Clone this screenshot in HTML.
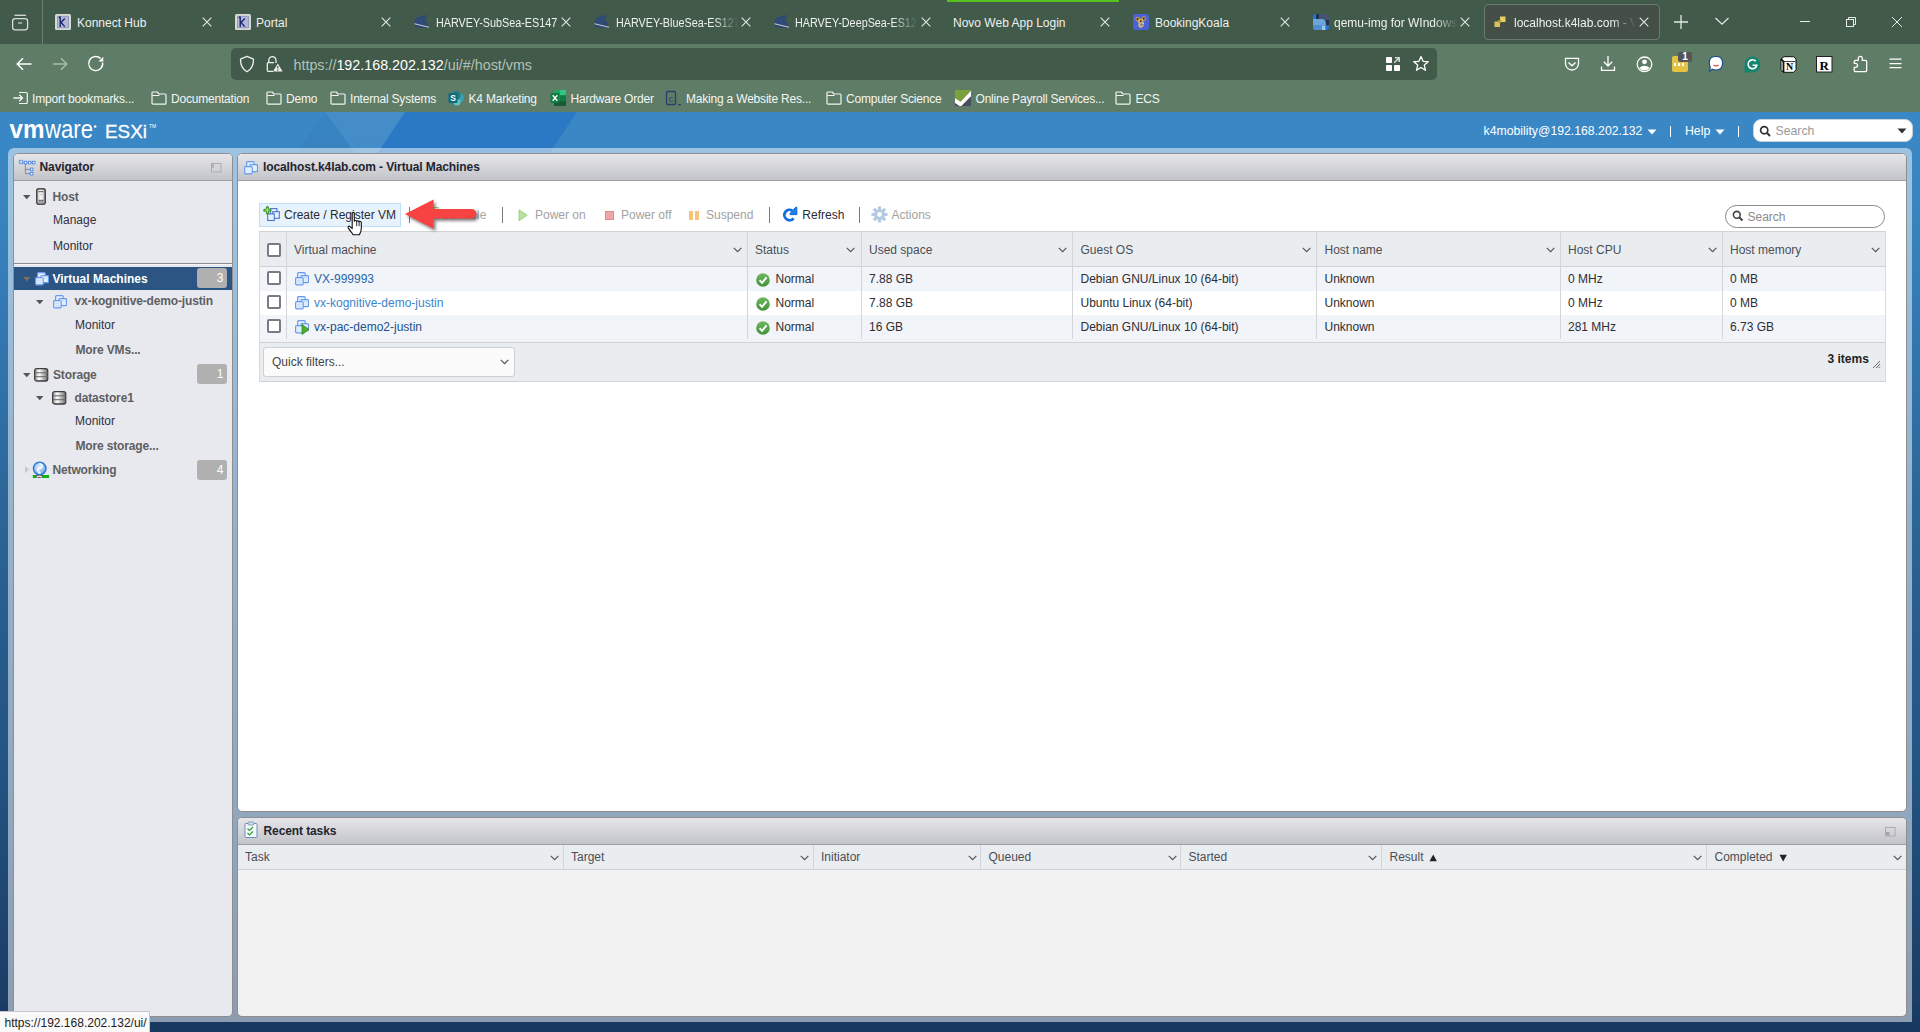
<!DOCTYPE html>
<html><head><meta charset="utf-8">
<style>
*{margin:0;padding:0;box-sizing:border-box}
html,body{width:1920px;height:1032px;overflow:hidden;font-family:"Liberation Sans",sans-serif;background:#1a3a62}
.a{position:absolute;white-space:nowrap}
#tabs{position:absolute;left:0;top:0;width:1920px;height:44px;background:#425a4a}
#tb{position:absolute;left:0;top:44px;width:1920px;height:40px;background:#5e7c66}
#bm{position:absolute;left:0;top:84px;width:1920px;height:28px;background:#5e7c66}
.tt{color:#eef1ee;font-size:12px;top:16px;line-height:14px}
.fade{-webkit-mask-image:linear-gradient(90deg,#000 80%,transparent 100%)}
.tx{top:14px;width:12px;height:12px}
.bt{color:#f4f6f4;font-size:12px;top:92px;line-height:14px;letter-spacing:-0.2px}
#esx{position:absolute;left:0;top:112px;width:1920px;height:920px;background:linear-gradient(#3a87c6 0px,#3a87c6 20px,#3786bf 88px,#3479b4 196px,#2c6698 388px,#295d8f 496px,#235585 638px,#1e4670 796px,#1b3d66 888px,#17375e 920px)}
#frame{position:absolute;left:8px;top:148px;width:1904px;height:874px;border-radius:6px 6px 0 0;background:rgba(255,255,255,0.5)}
.panel{position:absolute;background:#fff;border-radius:5px;overflow:hidden}
.ph{position:absolute;left:0;top:0;right:0;height:27px;background:linear-gradient(#e6e6ea,#c3c4c9);border-bottom:1px solid #9e9ea3}
.ph b{position:absolute;top:7px;font-size:12px;color:#2b2b33}
.nv{position:absolute;font-size:12px;line-height:14px;color:#30303c}
.g{font-weight:bold;color:#5e5e62;letter-spacing:-0.15px}
.hd{position:absolute;font-size:12px;line-height:14px;color:#4a4d55}
.tb12{font-size:12px;line-height:14px}
.cell{position:absolute;font-size:12px;line-height:14px;color:#2e2e33}
</style></head><body>
<div id="tabs">
<svg class="a" style="left:0;top:0" width="44" height="44"><g fill="none" stroke="#d9ddd9" stroke-width="1.3"><rect x="12.6" y="18.6" width="15" height="11.2" rx="2.5"/><path d="M14.5 15.3h11.4"/><path d="M18 23h4.2" stroke-width="1.1"/></g></svg>
<div class="a" style="left:42px;top:0;width:1px;height:44px;background:#6a7f6f"></div>
<!-- tab 1 -->
<svg class="a" style="left:55px;top:14px" width="16" height="16"><rect width="16" height="16" rx="1.5" fill="#d6d9d6"/><rect x="2.5" y="2.3" width="11" height="11.5" fill="#b4b8d2" stroke="#8a90bc" stroke-width="0.8"/><path d="M5.2 2.5V13M4 4.2L5.2 2.5M5.2 9.3L9.8 4.5M5.8 8.2L9.8 12.6" stroke="#1c2870" stroke-width="1.4" fill="none"/></svg>
<span class="a tt" style="left:77px">Konnect Hub</span>
<!-- tab 2 -->
<svg class="a" style="left:235px;top:14px" width="16" height="16"><rect width="16" height="16" rx="1.5" fill="#d6d9d6"/><rect x="2.5" y="2.3" width="11" height="11.5" fill="#b4b8d2" stroke="#8a90bc" stroke-width="0.8"/><path d="M5.2 2.5V13M4 4.2L5.2 2.5M5.2 9.3L9.8 4.5M5.8 8.2L9.8 12.6" stroke="#1c2870" stroke-width="1.4" fill="none"/></svg>
<span class="a tt" style="left:256px">Portal</span>
<!-- harvey tabs -->
<svg class="a" style="left:414px;top:14px" width="17" height="17"><path d="M0.5 5.5C3 3.5 7 1.2 12.5 1.2L14 1.8C12 2.5 11.2 4 11.6 6 12 7.8 14.3 8.8 14.3 10.5V13.5C10 14.5 4 14 0.5 12.5Z" fill="#2f4a74"/><path d="M0.5 9.8L15 13.3" stroke="#c4c9c4" stroke-width="1.1"/></svg>
<span class="a tt" style="left:436px;transform:scaleX(0.9);transform-origin:0 0">HARVEY-SubSea-ES147</span>
<svg class="a" style="left:594px;top:14px" width="17" height="17"><path d="M0.5 5.5C3 3.5 7 1.2 12.5 1.2L14 1.8C12 2.5 11.2 4 11.6 6 12 7.8 14.3 8.8 14.3 10.5V13.5C10 14.5 4 14 0.5 12.5Z" fill="#2f4a74"/><path d="M0.5 9.8L15 13.3" stroke="#c4c9c4" stroke-width="1.1"/></svg>
<span class="a tt fade" style="left:616px;width:136px;overflow:hidden;transform:scaleX(0.9);transform-origin:0 0">HARVEY-BlueSea-ES127</span>
<svg class="a" style="left:774px;top:14px" width="17" height="17"><path d="M0.5 5.5C3 3.5 7 1.2 12.5 1.2L14 1.8C12 2.5 11.2 4 11.6 6 12 7.8 14.3 8.8 14.3 10.5V13.5C10 14.5 4 14 0.5 12.5Z" fill="#2f4a74"/><path d="M0.5 9.8L15 13.3" stroke="#c4c9c4" stroke-width="1.1"/></svg>
<span class="a tt fade" style="left:795px;width:136px;overflow:hidden;transform:scaleX(0.9);transform-origin:0 0">HARVEY-DeepSea-ES127</span>
<div class="a" style="left:947px;top:0;width:172px;height:2px;background:#55c21f"></div>
<span class="a tt" style="left:953px">Novo Web App Login</span>
<svg class="a" style="left:1133px;top:14px" width="16" height="16"><rect width="16" height="16" rx="2.5" fill="#4b62d6"/><circle cx="4.5" cy="5" r="2.2" fill="#b99a55"/><circle cx="10.8" cy="4.5" r="2.2" fill="#b99a55"/><circle cx="4.5" cy="5" r="1" fill="#2a2010"/><circle cx="10.8" cy="4.5" r="1" fill="#2a2010"/><ellipse cx="7.6" cy="7.2" rx="2.8" ry="2.6" fill="#c9ab66"/><circle cx="7.8" cy="7.2" r="0.9" fill="#3a2a10"/><path d="M7.5 9.5C6 10.5 5.8 12 7 12.5 8.5 13 10 12 9.8 10.5" stroke="#d4b874" stroke-width="2" fill="none"/><path d="M9.5 8.2L10.5 10" stroke="#eee" stroke-width="1.1"/></svg>
<span class="a tt" style="left:1155px">BookingKoala</span>
<svg class="a" style="left:1313px;top:14px" width="16" height="16"><defs><clipPath id="qc"><rect width="16" height="16" rx="3"/></clipPath></defs><g clip-path="url(#qc)"><rect width="16" height="16" fill="#45556f"/><rect x="0" y="0" width="3" height="5" fill="#1a78e0"/><rect x="3" y="0" width="3" height="5" fill="#223350"/><rect x="12.5" y="6" width="3.5" height="5" fill="#233450"/><path d="M0 5H8.5Q12.8 5 12.8 9.5V16H0Z" fill="#6aa6dc"/><rect x="0" y="11" width="9" height="5" fill="#4f8fd0"/><rect x="9" y="12" width="3.5" height="4" fill="#9cc6ea"/><rect x="12.5" y="12" width="3.5" height="4" fill="#1a78e0"/></g></svg>
<span class="a tt fade" style="left:1334px;width:124px;overflow:hidden">qemu-img for WIndows</span>
<div class="a" style="left:1484px;top:4px;width:176px;height:36px;border-radius:4px;background:#434f47;border:1px solid #6a7c70"></div>
<svg class="a" style="left:1494px;top:16px" width="12" height="12"><rect x="0.5" y="5.5" width="5.5" height="5.5" fill="#d9c25a"/><rect x="6" y="0.5" width="5.5" height="5.5" fill="#e6cf62"/><rect x="4" y="4" width="3" height="3" fill="#b39a3a"/></svg>
<span class="a tt fade" style="left:1514px;width:122px;overflow:hidden">localhost.k4lab.com - Virtual Machines</span>
<svg class="a" style="left:201.75px;top:17px" width="10" height="10"><path d="M0.7 0.7L9.3 9.3M9.3 0.7L0.7 9.3" stroke="#e4e8e4" stroke-width="1.1"/></svg>
<svg class="a" style="left:381.25px;top:17px" width="10" height="10"><path d="M0.7 0.7L9.3 9.3M9.3 0.7L0.7 9.3" stroke="#e4e8e4" stroke-width="1.1"/></svg>
<svg class="a" style="left:561.00px;top:17px" width="10" height="10"><path d="M0.7 0.7L9.3 9.3M9.3 0.7L0.7 9.3" stroke="#e4e8e4" stroke-width="1.1"/></svg>
<svg class="a" style="left:741.00px;top:17px" width="10" height="10"><path d="M0.7 0.7L9.3 9.3M9.3 0.7L0.7 9.3" stroke="#e4e8e4" stroke-width="1.1"/></svg>
<svg class="a" style="left:920.50px;top:17px" width="10" height="10"><path d="M0.7 0.7L9.3 9.3M9.3 0.7L0.7 9.3" stroke="#e4e8e4" stroke-width="1.1"/></svg>
<svg class="a" style="left:1100.00px;top:17px" width="10" height="10"><path d="M0.7 0.7L9.3 9.3M9.3 0.7L0.7 9.3" stroke="#e4e8e4" stroke-width="1.1"/></svg>
<svg class="a" style="left:1280.00px;top:17px" width="10" height="10"><path d="M0.7 0.7L9.3 9.3M9.3 0.7L0.7 9.3" stroke="#e4e8e4" stroke-width="1.1"/></svg>
<svg class="a" style="left:1459.50px;top:17px" width="10" height="10"><path d="M0.7 0.7L9.3 9.3M9.3 0.7L0.7 9.3" stroke="#e4e8e4" stroke-width="1.1"/></svg>
<svg class="a" style="left:1639.00px;top:17px" width="10" height="10"><path d="M0.7 0.7L9.3 9.3M9.3 0.7L0.7 9.3" stroke="#e4e8e4" stroke-width="1.1"/></svg>
<svg class="a" style="left:1672px;top:13px" width="18" height="18"><path d="M9 2v14M2 9h14" stroke="#e4e8e4" stroke-width="1.3"/></svg>
<svg class="a" style="left:1714px;top:16px" width="16" height="10"><path d="M1.5 2L8 8.2 14.5 2" stroke="#e4e8e4" stroke-width="1.3" fill="none"/></svg>
<div class="a" style="left:1800px;top:21px;width:10px;height:1px;background:#e8ece8"></div>
<svg class="a" style="left:1845px;top:16px" width="13" height="13"><g fill="none" stroke="#e8ece8" stroke-width="1"><rect x="1.5" y="3.5" width="7" height="7"/><path d="M3.5 3.5V1.5H10.5V8.5H9"/></g></svg>
<svg class="a" style="left:1891px;top:16px" width="12" height="12"><path d="M1 1L11 11M11 1L1 11" stroke="#e8ece8" stroke-width="1"/></svg>
</div>
<div id="tb">
<svg class="a" style="left:14px;top:12px" width="20" height="16"><path d="M3.2 8H17.5M9 2.3L3.2 8 9 13.7" stroke="#fff" stroke-width="1.5" fill="none"/></svg>
<svg class="a" style="left:50px;top:12px" width="20" height="16"><path d="M3 8H16.8M11 2.3L16.8 8 11 13.7" stroke="#a9bdab" stroke-width="1.5" fill="none"/></svg>
<svg class="a" style="left:86px;top:10px" width="20" height="20"><path d="M16.6 8.5A7 7 0 1 1 14.6 4.6" stroke="#fff" stroke-width="1.4" fill="none"/><path d="M12.5 7.6H17.3V2.7Z" fill="#fff"/></svg>
<div class="a" style="left:231px;top:4px;width:1206px;height:32px;border-radius:5px;background:#415a4a"></div>
<svg class="a" style="left:238px;top:11px" width="18" height="18"><path d="M9 1.3L15.5 4.2C15.6 10 13 14.5 9 16.7 5 14.5 2.4 10 2.5 4.2Z" stroke="#eef0ee" stroke-width="1.3" fill="none" stroke-linejoin="round"/></svg>
<svg class="a" style="left:265px;top:11px" width="20" height="18"><path d="M3.8 7.3V5.3a3.6 3.6 0 0 1 7.2 0V8" stroke="#eef0ee" stroke-width="1.3" fill="none"/><path d="M8 16.3H3.3a1 1 0 0 1-1-1V8.7a1 1 0 0 1 1-1H9" stroke="#eef0ee" stroke-width="1.3" fill="none"/><path d="M12.8 8.6L17.6 16.6H8Z" fill="#eef0ee"/><path d="M12.8 11v2.6" stroke="#415a4a" stroke-width="1.2"/><circle cx="12.8" cy="15" r="0.7" fill="#415a4a"/></svg>
<span class="a" style="left:293.5px;top:13px;font-size:14.3px;line-height:16px;color:#b3c2b6">https://<span style="color:#fff">192.168.202.132</span>/ui/#/host/vms</span>
<svg class="a" style="left:1386px;top:13px" width="15" height="15"><rect x="0" y="0" width="6" height="6" rx="0.8" fill="#fff"/><rect x="0" y="8" width="6" height="6" rx="0.8" fill="#fff"/><rect x="8" y="8" width="6" height="6" rx="0.8" fill="#fff"/><path d="M8.2 5.8L13 1M9 0.8H13.2V5" stroke="#d0d4d0" stroke-width="1.6" fill="none"/></svg>
<svg class="a" style="left:1412px;top:11px" width="18" height="18"><path d="M9 1.5L11.1 6.3 16.2 6.7 12.3 10.1 13.5 15.3 9 12.5 4.5 15.3 5.7 10.1 1.8 6.7 6.9 6.3Z" stroke="#fff" stroke-width="1.3" fill="none" stroke-linejoin="round"/></svg>
<svg class="a" style="left:1563px;top:12px" width="18" height="16"><path d="M2.5 2.3H15.5V7.5A6.5 6.5 0 0 1 2.5 7.5Z" stroke="#fff" stroke-width="1.3" fill="none" stroke-linejoin="round"/><path d="M5.5 6.5L9 9.8 12.5 6.5" stroke="#fff" stroke-width="1.4" fill="none"/></svg>
<svg class="a" style="left:1600px;top:11px" width="16" height="17"><path d="M8 1V11M3.8 6.8L8 11 12.2 6.8M1.5 11.5V15.3H14.5V11.5" stroke="#fff" stroke-width="1.3" fill="none"/></svg>
<svg class="a" style="left:1636px;top:12px" width="17" height="17"><circle cx="8.5" cy="8.3" r="7.3" stroke="#fff" stroke-width="1.3" fill="none"/><circle cx="8.5" cy="5.8" r="2.4" fill="#fff"/><path d="M3.3 11.7Q8.5 7.6 13.7 11.7 11.5 14.6 8.5 14.6 5.5 14.6 3.3 11.7Z" fill="#fff"/></svg>
<div class="a" style="left:1672px;top:12px;width:16px;height:16px;border-radius:2px;background:#e3c244"></div>
<div class="a" style="left:1674px;top:19px;width:12px;height:3px;background:repeating-linear-gradient(90deg,#fff 0 2.5px,transparent 2.5px 4px)"></div>
<div class="a" style="left:1678px;top:8px;width:14px;height:10px;border-radius:2px;background:#555;color:#fff;font-size:10px;font-weight:bold;line-height:10px;text-align:center">1</div>
<svg class="a" style="left:1708px;top:11px" width="16" height="18"><path d="M8 1.3C12.3 1.3 14.6 3.5 14.6 7.8 14.6 12.3 12.3 15 8 15 6.6 15 5.3 14.7 4.3 14.2L1.3 16.3 2.3 12.6C1.6 11.3 1.3 9.7 1.3 7.8 1.3 3.5 3.7 1.3 8 1.3Z" fill="#fff" stroke="#1f4f8a" stroke-width="1.2"/><path d="M5.6 10Q8 12 10.5 10" stroke="#e0262b" stroke-width="1.2" fill="none"/></svg>
<svg class="a" style="left:1744px;top:12px" width="17" height="17"><path d="M8.5 0.5A8 8 0 1 1 8.5 16.5H0.5V8.5A8 8 0 0 1 8.5 0.5Z" fill="#15846e"/><path d="M11.8 5.3A4.4 4.4 0 1 0 12.8 9.2H8.6" stroke="#fff" stroke-width="1.6" fill="none"/></svg>
<svg class="a" style="left:1780px;top:12px" width="17" height="17"><path d="M1 3L4 0.7H13.5L16 3V13.8L13.5 16.3H3L1 13.5Z" fill="#fff" stroke="#111" stroke-width="1"/><path d="M1 3L3.5 5.5V16" stroke="#111" stroke-width="1.8" fill="none"/><path d="M3.5 5.5H15.5" stroke="#111" stroke-width="0.8"/><text x="9.5" y="14.2" text-anchor="middle" font-family="Liberation Serif" font-weight="bold" font-size="10" fill="#000">N</text></svg>
<svg class="a" style="left:1816px;top:12px" width="17" height="17"><rect x="0.5" y="0.5" width="15.5" height="15.5" fill="#fff" stroke="#222" stroke-width="1"/><text x="8.3" y="13.5" text-anchor="middle" font-family="Liberation Serif" font-weight="bold" font-size="13" fill="#000">R</text></svg>
<svg class="a" style="left:1852px;top:11px" width="17" height="18"><path d="M3.7 5.3H6.3V3.3A2 2 0 0 1 10.3 3.3V5.3H13.2A1.5 1.5 0 0 1 14.7 6.8V15.2A1.5 1.5 0 0 1 13.2 16.7H3.7A1.5 1.5 0 0 1 2.2 15.2V12.4H3.5A2.05 2.05 0 0 0 3.5 8.3H2.2V6.8A1.5 1.5 0 0 1 3.7 5.3Z" stroke="#fff" stroke-width="1.3" fill="none" stroke-linejoin="round"/></svg>
<svg class="a" style="left:1888px;top:13px" width="15" height="13"><path d="M1.5 2.2H13.5M1.5 6.7H13.5M1.5 10.6H13.5" stroke="#fff" stroke-width="1.3"/></svg>
</div>
<div id="bm"></div>
<div id="bmi">
<svg class="a" style="left:12px;top:91px" width="17" height="14"><path d="M7 1.5H14.3a1 1 0 0 1 1 1V11.5a1 1 0 0 1-1 1H7" stroke="#f2f4f2" stroke-width="1.2" fill="none"/><path d="M1.3 7H10.5M7.3 3.8L10.5 7 7.3 10.2" stroke="#f2f4f2" stroke-width="1.3" fill="none"/></svg>
<span class="a bt" style="left:32px">Import bookmarks...</span>
<svg class="a" style="left:151px;top:91px" width="16" height="14"><path d="M1 2a1 1 0 0 1 1-1h4.2l1.8 2h6a1 1 0 0 1 1 1v8.2a1 1 0 0 1-1 1H2a1 1 0 0 1-1-1Z" stroke="#f2f4f2" stroke-width="1.2" fill="none" stroke-linejoin="round"/><path d="M1.2 4.5H8.5" stroke="#f2f4f2" stroke-width="1"/></svg><span class="a bt" style="left:171px">Documentation</span>
<svg class="a" style="left:266px;top:91px" width="16" height="14"><path d="M1 2a1 1 0 0 1 1-1h4.2l1.8 2h6a1 1 0 0 1 1 1v8.2a1 1 0 0 1-1 1H2a1 1 0 0 1-1-1Z" stroke="#f2f4f2" stroke-width="1.2" fill="none" stroke-linejoin="round"/><path d="M1.2 4.5H8.5" stroke="#f2f4f2" stroke-width="1"/></svg><span class="a bt" style="left:286px">Demo</span>
<svg class="a" style="left:330px;top:91px" width="16" height="14"><path d="M1 2a1 1 0 0 1 1-1h4.2l1.8 2h6a1 1 0 0 1 1 1v8.2a1 1 0 0 1-1 1H2a1 1 0 0 1-1-1Z" stroke="#f2f4f2" stroke-width="1.2" fill="none" stroke-linejoin="round"/><path d="M1.2 4.5H8.5" stroke="#f2f4f2" stroke-width="1"/></svg><span class="a bt" style="left:350px">Internal Systems</span>
<svg class="a" style="left:448px;top:90px" width="17" height="16"><circle cx="11.5" cy="8" r="4.5" fill="#37a3b0"/><circle cx="9" cy="12" r="3.5" fill="#5fc2cc"/><circle cx="8" cy="5.5" r="4.5" fill="#1d7a86"/><rect x="0.5" y="3" width="9" height="10" rx="1" fill="#0f6b78"/><text x="5" y="11.3" text-anchor="middle" font-family="Liberation Sans" font-weight="bold" font-size="8.5" fill="#fff">S</text></svg>
<span class="a bt" style="left:468.5px">K4 Marketing</span>
<svg class="a" style="left:550px;top:90px" width="17" height="16"><rect x="4" y="0" width="12" height="16" rx="1" fill="#21a366"/><rect x="10" y="0" width="6" height="5.3" fill="#33c481"/><rect x="4" y="10.6" width="12" height="5.4" fill="#185c37"/><rect x="10" y="5.3" width="6" height="5.3" fill="#107c41"/><rect x="0.5" y="3" width="9" height="10" rx="1" fill="#107c41"/><path d="M2.7 5.3L7.3 10.8M7.3 5.3L2.7 10.8" stroke="#fff" stroke-width="1.4"/></svg>
<span class="a bt" style="left:570.5px">Hardware Order</span>
<svg class="a" style="left:665px;top:90px" width="18" height="16"><rect x="1.5" y="1.5" width="9" height="13" rx="1" stroke="#2b3c6e" stroke-width="1.3" fill="none"/><text x="6" y="12" text-anchor="middle" font-family="Liberation Sans" font-size="9" fill="#2b3c6e">c</text><path d="M13 14.6H16" stroke="#2b3c6e" stroke-width="1.2"/></svg>
<span class="a bt" style="left:686px">Making a Website Res...</span>
<svg class="a" style="left:826px;top:91px" width="16" height="14"><path d="M1 2a1 1 0 0 1 1-1h4.2l1.8 2h6a1 1 0 0 1 1 1v8.2a1 1 0 0 1-1 1H2a1 1 0 0 1-1-1Z" stroke="#f2f4f2" stroke-width="1.2" fill="none" stroke-linejoin="round"/><path d="M1.2 4.5H8.5" stroke="#f2f4f2" stroke-width="1"/></svg><span class="a bt" style="left:846px">Computer Science</span>
<svg class="a" style="left:955px;top:90px" width="16" height="16"><rect x="0" y="0" width="16" height="16" fill="#484e60"/><path d="M0 0H16V0.8L5.5 11.8 0 8Z" fill="#7ca03c"/><path d="M0 8L5.5 11.8 16 0.8V6.3L6.3 16H4.6L0 13Z" fill="#fff"/></svg>
<span class="a bt" style="left:975.5px">Online Payroll Services...</span>
<svg class="a" style="left:1115px;top:91px" width="16" height="14"><path d="M1 2a1 1 0 0 1 1-1h4.2l1.8 2h6a1 1 0 0 1 1 1v8.2a1 1 0 0 1-1 1H2a1 1 0 0 1-1-1Z" stroke="#f2f4f2" stroke-width="1.2" fill="none" stroke-linejoin="round"/><path d="M1.2 4.5H8.5" stroke="#f2f4f2" stroke-width="1"/></svg><span class="a bt" style="left:1135.5px">ECS</span>
</div>
<div id="esx"></div>
<svg class="a" style="left:0;top:112px" width="1920" height="42"><polygon points="325,0 405,0 377.3,41.5 355.6,41.5" fill="#ffffff" opacity="0.055"/><polygon points="325,0 295.6,41.5 355.6,41.5" fill="#000" opacity="0.025"/><polygon points="405,0 577,0 549.3,41.5 377.3,41.5" fill="#1f6ec4" opacity="0.55"/><polygon points="577,0 1920,0 1920,41.5 549.3,41.5" fill="#3d86c2" opacity="0.25"/></svg>
<svg class="a" style="left:8px;top:120px" width="150" height="24"><text x="1.6" y="17.8" font-family="Liberation Sans" font-weight="bold" font-size="25" textLength="35" lengthAdjust="spacingAndGlyphs" fill="#fff">vm</text><text x="37" y="17.8" font-family="Liberation Sans" font-size="25" textLength="48" lengthAdjust="spacingAndGlyphs" fill="#fff">ware</text><circle cx="87.2" cy="6.5" r="1.3" fill="#fff"/><text x="97" y="17.8" font-family="Liberation Sans" font-size="18.6" textLength="42" lengthAdjust="spacingAndGlyphs" fill="#fff" stroke="#fff" stroke-width="0.3">ESXi</text><text x="141" y="8" font-family="Liberation Sans" font-size="5" fill="#fff">TM</text></svg>
<span class="a" style="left:1483.5px;top:124px;font-size:12.25px;line-height:14px;color:#fff">k4mobility@192.168.202.132</span>
<svg class="a" style="left:1647px;top:129px" width="10" height="6"><path d="M0.5 0.5H9.5L5 5.5Z" fill="#fff"/></svg>
<div class="a" style="left:1670px;top:126px;width:1px;height:11px;background:#fff"></div>
<span class="a" style="left:1685px;top:124px;font-size:12.25px;line-height:14px;color:#fff">Help</span>
<svg class="a" style="left:1715px;top:129px" width="10" height="6"><path d="M0.5 0.5H9.5L5 5.5Z" fill="#fff"/></svg>
<div class="a" style="left:1738px;top:126px;width:1px;height:11px;background:#fff"></div>
<div class="a" style="left:1753px;top:119px;width:160px;height:23px;border-radius:8px;background:#fff;border:1px solid #c9d3dc"></div>
<svg class="a" style="left:1759px;top:125px" width="13" height="13"><circle cx="5.2" cy="5.2" r="3.6" stroke="#333" stroke-width="1.7" fill="none"/><path d="M7.8 7.8L11 11" stroke="#333" stroke-width="2"/></svg>
<span class="a" style="left:1775.5px;top:124px;font-size:12.25px;line-height:14px;color:#999">Search</span>
<svg class="a" style="left:1897px;top:128px" width="10" height="6"><path d="M0.5 0.5H9.5L5 5.5Z" fill="#333"/></svg>
<div id="frame"></div>
<!-- navigator panel -->
<div class="panel" style="left:13px;top:153px;width:220px;height:864px;background:#e8e9ee;border:1px solid #8e8e90">
 <div class="ph"></div>
</div>
<svg class="a" style="left:18px;top:159px" width="18" height="18"><path d="M4.7 3.6H6.2M8.8 3.6H10.3M12.9 3.6H14.4" stroke="#4f80dc" stroke-width="0.8"/><path d="M7.4 4.9V14.7H12.3M7.4 10.4H12.3" stroke="#7383a3" stroke-width="0.9" fill="none"/><rect x="1.3" y="1.3" width="3.4" height="3.4" fill="#b5d8fb" stroke="#6a9ae6" stroke-width="0.9"/><g fill="#fff" stroke="#4f80dc" stroke-width="0.9"><rect x="6.2" y="2.3" width="2.6" height="2.6"/><rect x="10.3" y="2.3" width="2.6" height="2.6"/><rect x="14.4" y="2.3" width="2.6" height="2.6"/><rect x="12.3" y="9.1" width="2.6" height="2.6"/><rect x="12.3" y="13.4" width="2.6" height="2.6"/></g></svg>
<span class="a" style="left:39.5px;top:160px;font-size:12px;line-height:14px;font-weight:bold;color:#222530;letter-spacing:-0.1px">Navigator</span>
<svg class="a" style="left:211px;top:163px" width="11" height="10"><rect x="0.5" y="0.5" width="9.5" height="8.5" fill="none" stroke="#acacb0"/><rect x="1" y="1" width="2" height="4" fill="#b4b4b8"/></svg>
<svg class="a" style="left:23px;top:195px" width="8" height="5"><path d="M0 0H7.5L3.75 4.2Z" fill="#555"/></svg><svg class="a" style="left:36px;top:188px" width="10" height="17"><defs><linearGradient id="hg" x1="0" x2="1"><stop offset="0" stop-color="#bbb"/><stop offset="0.5" stop-color="#fff"/><stop offset="1" stop-color="#aaa"/></linearGradient></defs><rect x="0.8" y="0.8" width="8.4" height="15.4" rx="1.5" fill="url(#hg)" stroke="#222" stroke-width="1.2"/><path d="M2.5 3.7H7.5M2.5 12.3H7.5M2.5 14H7.5" stroke="#444" stroke-width="0.9"/><circle cx="5" cy="6.8" r="0.5" fill="#444"/></svg>
<span class="a nv g" style="left:52.5px;top:190px">Host</span>
<span class="a nv" style="left:53px;top:213px">Manage</span>
<span class="a nv" style="left:53px;top:239px">Monitor</span>
<div class="a" style="left:14px;top:263px;width:218px;height:1px;background:#8f8f8f"></div>
<div class="a" style="left:14px;top:264px;width:218px;height:1px;background:#f5f5f8"></div>
<div class="a" style="left:14px;top:267px;width:218px;height:23px;background:#2c5584"></div>
<svg class="a" style="left:23px;top:277px" width="8" height="5"><path d="M0 0H7.5L3.75 4.2Z" fill="#7b6f60"/></svg><svg class="a" style="left:34px;top:272px" width="15" height="14"><g stroke="#6b98ec" stroke-width="1.15" fill="#dfeffd"><rect x="3.6" y="0.6" width="7.6" height="6.5" rx="1"/><rect x="6.9" y="3.6" width="7.6" height="7" rx="1"/><rect x="1.6" y="5.6" width="7.6" height="7.2" rx="1"/></g><path d="M3 8.3h5M3 10.5h5M8 5.8h5" stroke="#b4d2f6" stroke-width="0.7"/></svg>
<span class="a nv" style="left:52.5px;top:272px;font-weight:bold;color:#fff">Virtual Machines</span>
<div class="a" style="left:197px;top:268px;width:30px;height:19.5px;border-radius:3px;background:#b0b0b0;color:#fff;font-size:12px;line-height:21px;text-align:right;padding-right:3.5px">3</div><svg class="a" style="left:36px;top:300px" width="8" height="5"><path d="M0 0H7.5L3.75 4.2Z" fill="#555"/></svg><svg class="a" style="left:52px;top:295px" width="15" height="14"><g stroke="#6b98ec" stroke-width="1.15" fill="#dfeffd"><rect x="3.6" y="0.6" width="7.6" height="6.5" rx="1"/><rect x="6.9" y="3.6" width="7.6" height="7" rx="1"/><rect x="1.6" y="5.6" width="7.6" height="7.2" rx="1"/></g><path d="M3 8.3h5M3 10.5h5M8 5.8h5" stroke="#b4d2f6" stroke-width="0.7"/></svg>
<span class="a nv g" style="left:74.5px;top:294px">vx-kognitive-demo-justin</span>
<span class="a nv" style="left:75px;top:318px">Monitor</span>
<span class="a nv g" style="left:75.5px;top:343px;font-weight:bold">More VMs...</span>
<svg class="a" style="left:23px;top:373px" width="8" height="5"><path d="M0 0H7.5L3.75 4.2Z" fill="#555"/></svg><svg class="a" style="left:34px;top:368px" width="15" height="14"><defs><linearGradient id="dg" x1="0" x2="1"><stop offset="0" stop-color="#9a9a9a"/><stop offset="0.35" stop-color="#fff"/><stop offset="1" stop-color="#6f6f6f"/></linearGradient></defs><rect x="0.7" y="0.7" width="13" height="12.3" rx="2" fill="url(#dg)" stroke="#3d3d3d" stroke-width="1.3"/><path d="M1 4.8H14M1 8.7H14" stroke="#666" stroke-width="1"/></svg>
<span class="a nv g" style="left:53px;top:367.5px">Storage</span>
<div class="a" style="left:197px;top:364px;width:30px;height:19.5px;border-radius:3px;background:#b0b0b0;color:#fff;font-size:12px;line-height:21px;text-align:right;padding-right:3.5px">1</div><svg class="a" style="left:36px;top:396px" width="8" height="5"><path d="M0 0H7.5L3.75 4.2Z" fill="#555"/></svg><svg class="a" style="left:52px;top:391px" width="15" height="14"><defs><linearGradient id="dg" x1="0" x2="1"><stop offset="0" stop-color="#9a9a9a"/><stop offset="0.35" stop-color="#fff"/><stop offset="1" stop-color="#6f6f6f"/></linearGradient></defs><rect x="0.7" y="0.7" width="13" height="12.3" rx="2" fill="url(#dg)" stroke="#3d3d3d" stroke-width="1.3"/><path d="M1 4.8H14M1 8.7H14" stroke="#666" stroke-width="1"/></svg>
<span class="a nv g" style="left:74.5px;top:390.5px">datastore1</span>
<span class="a nv" style="left:75px;top:414px">Monitor</span>
<span class="a nv g" style="left:75.5px;top:439px">More storage...</span>
<svg class="a" style="left:25px;top:466px" width="5" height="8"><path d="M0 0L4 3.6 0 7.2Z" fill="#c8c8cc"/></svg>
<svg class="a" style="left:32px;top:461px" width="18" height="18"><defs><radialGradient id="gg" cx="0.45" cy="0.4" r="0.6"><stop offset="0" stop-color="#eaf6ff"/><stop offset="0.6" stop-color="#9cc4f4"/><stop offset="1" stop-color="#5b93e8"/></radialGradient></defs><circle cx="7.7" cy="7.5" r="6.3" fill="url(#gg)" stroke="#1f74d6" stroke-width="1.3"/><path d="M7.2 2.6Q11.3 3.6 9.6 6.2 7.2 7.6 5.6 8.8 6.2 11.5 8.6 12.3" stroke="#f4fbff" stroke-width="2" fill="none" opacity="0.9"/><rect x="0.8" y="14" width="16.3" height="3" fill="#0db20d"/><rect x="4" y="14" width="6.5" height="3" fill="#666"/><path d="M4.8 16.3Q7.3 14.2 9.8 16.3" stroke="#fff" stroke-width="1.1" fill="none"/></svg>
<span class="a nv g" style="left:52.5px;top:462.5px">Networking</span>
<div class="a" style="left:197px;top:460px;width:30px;height:19.5px;border-radius:3px;background:#b0b0b0;color:#fff;font-size:12px;line-height:21px;text-align:right;padding-right:3.5px">4</div><!-- main panel -->
<div class="panel" style="left:237px;top:153px;width:1670px;height:659px;border:1px solid #8e8e90">
 <div class="ph"></div>
</div>
<svg class="a" style="left:243px;top:161px" width="15" height="14"><g stroke="#6b98ec" stroke-width="1.15" fill="#dfeffd"><rect x="3.6" y="0.6" width="7.6" height="6.5" rx="1"/><rect x="6.9" y="3.6" width="7.6" height="7" rx="1"/><rect x="1.6" y="5.6" width="7.6" height="7.2" rx="1"/></g></svg>
<span class="a" style="left:263px;top:160px;font-size:12px;line-height:14px;font-weight:bold;color:#222530;letter-spacing:-0.1px">localhost.k4lab.com - Virtual Machines</span>
<!-- toolbar -->
<div class="a" style="left:259px;top:203px;width:142px;height:24px;background:#e7f3fc;border:1px solid #bfdff5"></div>
<svg class="a" style="left:263px;top:206px" width="18" height="17"><g stroke="#4d72cf" stroke-width="1.1" fill="#e6f3fd"><rect x="7.4" y="2.6" width="6.5" height="6.8"/><rect x="9.7" y="5.7" width="6.6" height="6.6"/><rect x="4.7" y="7.9" width="6.6" height="6.6"/></g><path d="M4.4 1.5V6.9M1.7 4.2H7.1" stroke="#3d8f2c" stroke-width="3" stroke-linecap="round"/><path d="M4.4 1.7V6.7M1.9 4.2H6.9" stroke="#8ee86e" stroke-width="1.3"/></svg>
<span class="a tb12" style="left:284px;top:208px;color:#2a2a33">Create / Register VM</span>
<div class="a" style="left:409px;top:207px;width:1px;height:16px;background:#7a7a7a"></div>
<div class="a" style="left:425px;top:207px;width:14px;height:12px;border:1px solid #9ccf8c;background:#eef8ea"></div>
<span class="a tb12" style="left:440.5px;top:208px;color:#a8a8a8;letter-spacing:0.3px">Console</span>
<div class="a" style="left:502px;top:207px;width:1px;height:16px;background:#7a7a7a"></div>
<svg class="a" style="left:518px;top:209px" width="10" height="13"><path d="M1 0.8L9.2 6.2 1 11.8Z" fill="#b8e0a0" stroke="#8fce6e" stroke-width="0.8"/></svg>
<span class="a tb12" style="left:535px;top:208px;color:#a2a2a2">Power on</span>
<div class="a" style="left:605px;top:211px;width:9px;height:9px;background:#f0a6a6;border:1px solid #dc8c8c"></div>
<span class="a tb12" style="left:621px;top:208px;color:#a2a2a2">Power off</span>
<div class="a" style="left:689px;top:211px;width:4px;height:9px;background:#f7c37a"></div>
<div class="a" style="left:695px;top:211px;width:4px;height:9px;background:#f7c37a"></div>
<span class="a tb12" style="left:706px;top:208px;color:#a2a2a2">Suspend</span>
<div class="a" style="left:769px;top:207px;width:1px;height:16px;background:#7a7a7a"></div>
<svg class="a" style="left:782px;top:206px" width="17" height="17"><path d="M10.3 4.6A5.2 5.2 0 1 0 11.6 12.3" stroke="#0f6fe0" stroke-width="2.8" fill="none"/><path d="M13.8 1.2H14.8V8.6H8.1V7.4Z" fill="#1a80ea" stroke="#0b66d8" stroke-width="1" stroke-linejoin="round"/></svg>
<span class="a tb12" style="left:802.3px;top:208px;color:#2a2a33">Refresh</span>
<div class="a" style="left:859px;top:207px;width:1px;height:16px;background:#7a7a7a"></div>
<svg class="a" style="left:871px;top:206px" width="18" height="18"><g transform="translate(8.5,8.5)"><circle r="5.3" fill="#b5c9e2"/><g fill="#b5c9e2"><rect x="-1.6" y="-8" width="3.2" height="4" transform="rotate(0)"/><rect x="-1.6" y="-8" width="3.2" height="4" transform="rotate(45)"/><rect x="-1.6" y="-8" width="3.2" height="4" transform="rotate(90)"/><rect x="-1.6" y="-8" width="3.2" height="4" transform="rotate(135)"/><rect x="-1.6" y="-8" width="3.2" height="4" transform="rotate(180)"/><rect x="-1.6" y="-8" width="3.2" height="4" transform="rotate(225)"/><rect x="-1.6" y="-8" width="3.2" height="4" transform="rotate(270)"/><rect x="-1.6" y="-8" width="3.2" height="4" transform="rotate(315)"/></g><circle r="2.4" fill="#fff"/></g></svg>
<span class="a tb12" style="left:891.5px;top:208px;color:#a2a2a2">Actions</span>
<div class="a" style="left:1725px;top:205px;width:160px;height:23px;border-radius:11.5px;border:1px solid #8a8a8a;background:#fff"></div>
<svg class="a" style="left:1732px;top:210px" width="12" height="12"><circle cx="4.8" cy="4.8" r="3.4" stroke="#444" stroke-width="1.6" fill="none"/><path d="M7.2 7.2L10.5 10.5" stroke="#444" stroke-width="2"/></svg>
<span class="a tb12" style="left:1747.5px;top:209.5px;color:#8a8a8a">Search</span>
<!-- table -->
<div class="a" style="left:259px;top:231px;width:1627px;height:36px;background:#eaedf0;border-top:1px solid #d0d3d6;border-bottom:1px solid #cfd2d5;border-left:1px solid #d8dadc;border-right:1px solid #d8dadc"></div>
<div class="a" style="left:260px;top:267px;width:1625px;height:24px;background:#f1f4f9"></div>
<div class="a" style="left:260px;top:291px;width:1625px;height:24px;background:#fff"></div>
<div class="a" style="left:260px;top:315px;width:1625px;height:24px;background:#f1f4f9"></div>
<div class="a" style="left:259px;top:267px;width:1px;height:75px;background:#d8dadc"></div>
<div class="a" style="left:1885px;top:267px;width:1px;height:75px;background:#d8dadc"></div>
<div class="a" style="left:260px;top:339px;width:1625px;height:3px;background:#f2f2f2"></div>
<div class="a" style="left:259px;top:342px;width:1627px;height:40px;background:#eaedf0;border-top:1px solid #cfd0d2;border-bottom:1px solid #d0d3d6;border-left:1px solid #d8dadc;border-right:1px solid #d8dadc"></div>
<div class="a" style="left:286px;top:232px;width:1px;height:107px;background:#d3d5d8"></div>
<span class="a hd" style="left:294px;top:243px">Virtual machine</span>
<svg class="a" style="left:733px;top:247px" width="10" height="6"><path d="M0.8 0.8L4.6 4.6 8.4 0.8" stroke="#555" stroke-width="1.2" fill="none"/></svg><div class="a" style="left:747px;top:232px;width:1px;height:107px;background:#d3d5d8"></div>
<span class="a hd" style="left:755px;top:243px">Status</span>
<svg class="a" style="left:846px;top:247px" width="10" height="6"><path d="M0.8 0.8L4.6 4.6 8.4 0.8" stroke="#555" stroke-width="1.2" fill="none"/></svg><div class="a" style="left:861px;top:232px;width:1px;height:107px;background:#d3d5d8"></div>
<span class="a hd" style="left:869px;top:243px">Used space</span>
<svg class="a" style="left:1058px;top:247px" width="10" height="6"><path d="M0.8 0.8L4.6 4.6 8.4 0.8" stroke="#555" stroke-width="1.2" fill="none"/></svg><div class="a" style="left:1072px;top:232px;width:1px;height:107px;background:#d3d5d8"></div>
<span class="a hd" style="left:1080.5px;top:243px">Guest OS</span>
<svg class="a" style="left:1302px;top:247px" width="10" height="6"><path d="M0.8 0.8L4.6 4.6 8.4 0.8" stroke="#555" stroke-width="1.2" fill="none"/></svg><div class="a" style="left:1316px;top:232px;width:1px;height:107px;background:#d3d5d8"></div>
<span class="a hd" style="left:1324.5px;top:243px">Host name</span>
<svg class="a" style="left:1546px;top:247px" width="10" height="6"><path d="M0.8 0.8L4.6 4.6 8.4 0.8" stroke="#555" stroke-width="1.2" fill="none"/></svg><div class="a" style="left:1560px;top:232px;width:1px;height:107px;background:#d3d5d8"></div>
<span class="a hd" style="left:1568px;top:243px">Host CPU</span>
<svg class="a" style="left:1708px;top:247px" width="10" height="6"><path d="M0.8 0.8L4.6 4.6 8.4 0.8" stroke="#555" stroke-width="1.2" fill="none"/></svg><div class="a" style="left:1722px;top:232px;width:1px;height:107px;background:#d3d5d8"></div>
<span class="a hd" style="left:1730px;top:243px">Host memory</span>
<svg class="a" style="left:1870.5px;top:247px" width="10" height="6"><path d="M0.8 0.8L4.6 4.6 8.4 0.8" stroke="#555" stroke-width="1.2" fill="none"/></svg><div class="a" style="left:267px;top:243px;width:14px;height:14px;border:2px solid #7a7a86;border-radius:2px;background:#fff"></div><div class="a" style="left:267px;top:271px;width:14px;height:14px;border:2px solid #7a7a86;border-radius:2px;background:#fff"></div><svg class="a" style="left:294px;top:272px" width="15" height="14"><g stroke="#6b98ec" stroke-width="1.15" fill="#dfeffd"><rect x="3.6" y="0.6" width="7.6" height="6.5" rx="1"/><rect x="6.9" y="3.6" width="7.6" height="7" rx="1"/><rect x="1.6" y="5.6" width="7.6" height="7.2" rx="1"/></g><path d="M3 8.3h5M3 10.5h5M8 5.8h5" stroke="#b4d2f6" stroke-width="0.7"/></svg><span class="a cell" style="left:314px;top:272px;color:#2b66a8">VX-999993</span>
<svg class="a" style="left:756px;top:273px" width="15" height="15"><defs><linearGradient id="okg" x1="0" y1="0" x2="0" y2="1"><stop offset="0" stop-color="#72b862"/><stop offset="1" stop-color="#3f9334"/></linearGradient></defs><circle cx="7" cy="7" r="6.8" fill="url(#okg)"/><path d="M3.6 7.2L6 9.8 10.6 4.3" stroke="#fff" stroke-width="1.9" fill="none"/></svg><span class="a cell" style="left:775.5px;top:272px">Normal</span>
<span class="a cell" style="left:869px;top:272px">7.88 GB</span>
<span class="a cell" style="left:1080.5px;top:272px">Debian GNU/Linux 10 (64-bit)</span>
<span class="a cell" style="left:1324.5px;top:272px">Unknown</span>
<span class="a cell" style="left:1568px;top:272px">0 MHz</span>
<span class="a cell" style="left:1730px;top:272px">0 MB</span>
<div class="a" style="left:267px;top:295px;width:14px;height:14px;border:2px solid #7a7a86;border-radius:2px;background:#fff"></div><svg class="a" style="left:294px;top:296px" width="15" height="14"><g stroke="#6b98ec" stroke-width="1.15" fill="#dfeffd"><rect x="3.6" y="0.6" width="7.6" height="6.5" rx="1"/><rect x="6.9" y="3.6" width="7.6" height="7" rx="1"/><rect x="1.6" y="5.6" width="7.6" height="7.2" rx="1"/></g><path d="M3 8.3h5M3 10.5h5M8 5.8h5" stroke="#b4d2f6" stroke-width="0.7"/></svg><span class="a cell" style="left:314px;top:296px;color:#3c84cc">vx-kognitive-demo-justin</span>
<svg class="a" style="left:756px;top:297px" width="15" height="15"><defs><linearGradient id="okg" x1="0" y1="0" x2="0" y2="1"><stop offset="0" stop-color="#72b862"/><stop offset="1" stop-color="#3f9334"/></linearGradient></defs><circle cx="7" cy="7" r="6.8" fill="url(#okg)"/><path d="M3.6 7.2L6 9.8 10.6 4.3" stroke="#fff" stroke-width="1.9" fill="none"/></svg><span class="a cell" style="left:775.5px;top:296px">Normal</span>
<span class="a cell" style="left:869px;top:296px">7.88 GB</span>
<span class="a cell" style="left:1080.5px;top:296px">Ubuntu Linux (64-bit)</span>
<span class="a cell" style="left:1324.5px;top:296px">Unknown</span>
<span class="a cell" style="left:1568px;top:296px">0 MHz</span>
<span class="a cell" style="left:1730px;top:296px">0 MB</span>
<div class="a" style="left:267px;top:319px;width:14px;height:14px;border:2px solid #7a7a86;border-radius:2px;background:#fff"></div><svg class="a" style="left:294px;top:320px" width="16" height="15"><g stroke="#6b98ec" stroke-width="1.15" fill="#dfeffd"><rect x="3.6" y="0.6" width="7.6" height="6.5" rx="1"/><rect x="6.9" y="3.6" width="7.6" height="7" rx="1"/><rect x="1.6" y="5.6" width="7.6" height="7.2" rx="1"/></g><path d="M8 4.5L15 9.5 8 14.5Z" fill="#4cae2c" stroke="#2e8a1a" stroke-width="0.8"/></svg><span class="a cell" style="left:314px;top:320px;color:#23518d">vx-pac-demo2-justin</span>
<svg class="a" style="left:756px;top:321px" width="15" height="15"><defs><linearGradient id="okg" x1="0" y1="0" x2="0" y2="1"><stop offset="0" stop-color="#72b862"/><stop offset="1" stop-color="#3f9334"/></linearGradient></defs><circle cx="7" cy="7" r="6.8" fill="url(#okg)"/><path d="M3.6 7.2L6 9.8 10.6 4.3" stroke="#fff" stroke-width="1.9" fill="none"/></svg><span class="a cell" style="left:775.5px;top:320px">Normal</span>
<span class="a cell" style="left:869px;top:320px">16 GB</span>
<span class="a cell" style="left:1080.5px;top:320px">Debian GNU/Linux 10 (64-bit)</span>
<span class="a cell" style="left:1324.5px;top:320px">Unknown</span>
<span class="a cell" style="left:1568px;top:320px">281 MHz</span>
<span class="a cell" style="left:1730px;top:320px">6.73 GB</span>
<div class="a" style="left:263px;top:347px;width:252px;height:30px;border-radius:3px;background:#fbfbfb;border:1px solid #cfcfcf"></div>
<span class="a cell" style="left:272px;top:354.5px;color:#444">Quick filters...</span>
<svg class="a" style="left:499.5px;top:359px" width="10" height="6"><path d="M0.8 0.8L4.6 4.6 8.4 0.8" stroke="#555" stroke-width="1.2" fill="none"/></svg>
<span class="a cell" style="left:1827.5px;top:352px;font-weight:bold;color:#222">3 items</span>
<svg class="a" style="left:1872px;top:360px" width="9" height="9"><path d="M1 8L8 1M4 8L8 4M6.5 8L8 6.5" stroke="#666" stroke-width="1"/></svg>
<!-- recent tasks panel -->
<div class="panel" style="left:237px;top:817px;width:1670px;height:200px;background:#f2f2f2;border:1px solid #8e8e90">
 <div class="ph"></div>
</div>
<svg class="a" style="left:244px;top:821px" width="15" height="18"><rect x="1" y="2.5" width="12" height="14" rx="1" fill="#f4f8fc" stroke="#6c8fb8" stroke-width="1"/><rect x="4" y="1" width="6" height="3" rx="1" fill="#d0dcea" stroke="#6c8fb8" stroke-width="0.8"/><path d="M3.5 7.5L5.5 9.5 9 6M3.5 12L5.5 14 9 10.5" stroke="#2fa02f" stroke-width="1.2" fill="none"/></svg>
<span class="a" style="left:263.5px;top:824px;font-size:12px;line-height:14px;font-weight:bold;color:#222530;letter-spacing:-0.1px">Recent tasks</span>
<svg class="a" style="left:1885px;top:827px" width="11" height="10"><rect x="0.5" y="0.5" width="9.5" height="8.5" fill="none" stroke="#acacb0"/><rect x="1" y="5" width="3.5" height="3.5" fill="#a4a4a8"/></svg>
<div class="a" style="left:238px;top:845px;width:1668px;height:25px;background:#eaedf0;border-bottom:1px solid #cfd2d5"></div>
<span class="a hd" style="left:245px;top:849.5px">Task</span>
<svg class="a" style="left:550px;top:855px" width="10" height="6"><path d="M0.8 0.8L4.6 4.6 8.4 0.8" stroke="#555" stroke-width="1.2" fill="none"/></svg><div class="a" style="left:563px;top:845px;width:1px;height:24px;background:#d3d5d8"></div>
<span class="a hd" style="left:571px;top:849.5px">Target</span>
<svg class="a" style="left:800px;top:855px" width="10" height="6"><path d="M0.8 0.8L4.6 4.6 8.4 0.8" stroke="#555" stroke-width="1.2" fill="none"/></svg><div class="a" style="left:813px;top:845px;width:1px;height:24px;background:#d3d5d8"></div>
<span class="a hd" style="left:821px;top:849.5px">Initiator</span>
<svg class="a" style="left:967.5px;top:855px" width="10" height="6"><path d="M0.8 0.8L4.6 4.6 8.4 0.8" stroke="#555" stroke-width="1.2" fill="none"/></svg><div class="a" style="left:980px;top:845px;width:1px;height:24px;background:#d3d5d8"></div>
<span class="a hd" style="left:988.5px;top:849.5px">Queued</span>
<svg class="a" style="left:1167.5px;top:855px" width="10" height="6"><path d="M0.8 0.8L4.6 4.6 8.4 0.8" stroke="#555" stroke-width="1.2" fill="none"/></svg><div class="a" style="left:1180px;top:845px;width:1px;height:24px;background:#d3d5d8"></div>
<span class="a hd" style="left:1188.5px;top:849.5px">Started</span>
<svg class="a" style="left:1367.5px;top:855px" width="10" height="6"><path d="M0.8 0.8L4.6 4.6 8.4 0.8" stroke="#555" stroke-width="1.2" fill="none"/></svg><div class="a" style="left:1381px;top:845px;width:1px;height:24px;background:#d3d5d8"></div>
<span class="a hd" style="left:1389.5px;top:849.5px">Result</span>
<svg class="a" style="left:1693px;top:855px" width="10" height="6"><path d="M0.8 0.8L4.6 4.6 8.4 0.8" stroke="#555" stroke-width="1.2" fill="none"/></svg><div class="a" style="left:1706px;top:845px;width:1px;height:24px;background:#d3d5d8"></div>
<span class="a hd" style="left:1714.5px;top:849.5px">Completed</span>
<svg class="a" style="left:1893px;top:855px" width="10" height="6"><path d="M0.8 0.8L4.6 4.6 8.4 0.8" stroke="#555" stroke-width="1.2" fill="none"/></svg><svg class="a" style="left:1429px;top:854px" width="9" height="8"><path d="M0.5 7.2L4.2 0.6 7.9 7.2Z" fill="#222"/></svg>
<svg class="a" style="left:1779px;top:854px" width="9" height="8"><path d="M0.5 0.8L4.2 7.4 7.9 0.8Z" fill="#222"/></svg>
<div class="a" style="left:0;top:1011px;width:150px;height:21px;background:#f9f9f9;border-top:1px solid #c8c8c8;border-right:1px solid #c8c8c8"></div>
<span class="a" style="left:4.5px;top:1016px;font-size:12px;line-height:14px;color:#1c1c1c">https://192.168.202.132/ui/</span>
<!-- red arrow -->
<svg class="a" style="left:397.5px;top:194px" width="90" height="42"><defs><filter id="sh" x="-20%" y="-30%" width="140%" height="160%"><feGaussianBlur stdDeviation="1.6"/></filter></defs><g transform="translate(2,2.5)" filter="url(#sh)" opacity="0.55"><path d="M6.9 20.1L35.6 5.5V15H73.7A4.8 4.8 0 0 1 73.7 24.6H35.6V34.8Z" fill="#222"/></g><path d="M6.9 20.1L35.6 5.5V15H73.7A4.8 4.8 0 0 1 73.7 24.6H35.6V34.8Z" fill="#f84343"/></svg>
<!-- cursor -->
<svg class="a" style="left:346px;top:211px" width="22" height="28"><path d="M6.2 2.3C6.2 1 8.3 1 8.3 2.3V10.2C8.6 9.3 10.5 9.3 10.7 10.4 11 9.6 12.9 9.6 13.1 10.8 13.5 10.1 15.3 10.3 15.3 11.6V17.5C15.3 20.8 13.7 22.3 13.5 23.8H7.1C6.3 21.9 4.5 20.4 2.3 17.1 1.5 15.8 2.9 14.6 4 15.6L6.2 17.6Z" fill="#fff" stroke="#111" stroke-width="1.1" stroke-linejoin="round"/><path d="M10.7 10.6V15.2M13.1 11V15.2" stroke="#111" stroke-width="0.9"/></svg>

</body></html>
